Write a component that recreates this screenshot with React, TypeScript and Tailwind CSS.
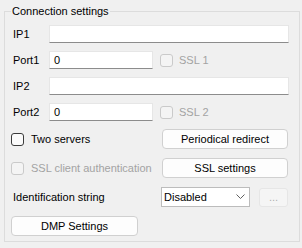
import React from "react";

const font = { fontFamily: '"Liberation Sans", Arial, sans-serif' };

function Check({ disabled = false }: { disabled?: boolean }) {
  return (
    <span
      className={
        disabled
          ? "inline-block h-[13px] w-[13px] shrink-0 rounded-[3px] border border-[#cacaca] bg-[#f4f4f4]"
          : "inline-block h-[13px] w-[13px] shrink-0 rounded-[3px] border border-[#3b3b3b] bg-[#fbfbfb]"
      }
    />
  );
}

function TextBox({ value = "", className = "" }: { value?: string; className?: string }) {
  return (
    <div
      className={`flex h-[18px] items-center border border-[#e6e6e6] border-b-[#8c8c8c] bg-white pl-[4px] text-black ${className}`}
    >
      {value}
    </div>
  );
}

function Btn({ label, className = "" }: { label: string; className?: string }) {
  return (
    <div
      className={`flex h-[20px] items-center justify-center rounded-[4px] border border-[#d0d0d0] bg-[#fdfdfd] text-black ${className}`}
    >
      {label}
    </div>
  );
}

export default function App() {
  return (
    <div
      className="h-[248px] w-[302px] bg-[#f0f0f0] pl-[4px] pt-[4px] text-[11px] leading-[15px]"
      style={font}
    >
      <fieldset className="w-[296px] border border-[#dcdcdc] pb-[5px]">
        <legend className="ml-[6px] px-[1px] text-black">Connection settings</legend>

        {/* IP / port rows */}
        <div className="mt-[6px] flex flex-col gap-2 pr-[10px]">
          <div className="flex items-center">
            <span className="w-[44px] pl-2">IP1</span>
            <TextBox className="flex-1" />
          </div>
          <div className="flex items-center">
            <span className="w-[44px] pl-2">Port1</span>
            <TextBox value="0" className="w-[104px]" />
            <span className="ml-[7px] flex items-center gap-[6px] text-[#a3a3a3]">
              <Check disabled />
              SSL 1
            </span>
          </div>
          <div className="flex items-center">
            <span className="w-[44px] pl-2">IP2</span>
            <TextBox className="flex-1" />
          </div>
          <div className="flex items-center">
            <span className="w-[44px] pl-2">Port2</span>
            <TextBox value="0" className="w-[104px]" />
            <span className="ml-[7px] flex items-center gap-[6px] text-[#a3a3a3]">
              <Check disabled />
              SSL 2
            </span>
          </div>
        </div>

        {/* options */}
        <div className="mt-[8px] flex flex-col gap-[9px] pr-[11px]">
          <div className="flex items-center justify-between pl-[6px]">
            <span className="flex items-center gap-[7px] text-black">
              <Check />
              Two servers
            </span>
            <Btn label="Periodical redirect" className="w-[126px]" />
          </div>
          <div className="flex items-center justify-between pl-[6px]">
            <span className="flex items-center gap-[7px] text-[#a3a3a3]">
              <Check disabled />
              SSL client authentication
            </span>
            <Btn label="SSL settings" className="w-[126px]" />
          </div>
          <div className="flex items-center justify-between pl-2">
            <span className="text-black">Identification string</span>
            <div className="flex items-center gap-[9px]">
              <div className="flex h-[20px] w-[89px] items-center justify-between border border-[#bcbcbc] bg-white pl-[2px] pr-[4px] text-black">
                Disabled
                <svg width="9" height="6" viewBox="0 0 9 6" fill="none">
                  <path d="M0.5 0.5 L4.5 4.5 L8.5 0.5" stroke="#606060" strokeWidth="1" />
                </svg>
              </div>
              <div className="flex h-[19px] w-[29px] items-center justify-center rounded-[3px] border border-[#e6e6e6] bg-[#f5f5f5] text-[#b0b0b0]">
                ...
              </div>
            </div>
          </div>
          <div className="pl-[6px]">
            <Btn label="DMP Settings" className="w-[127px]" />
          </div>
        </div>
      </fieldset>
    </div>
  );
}
